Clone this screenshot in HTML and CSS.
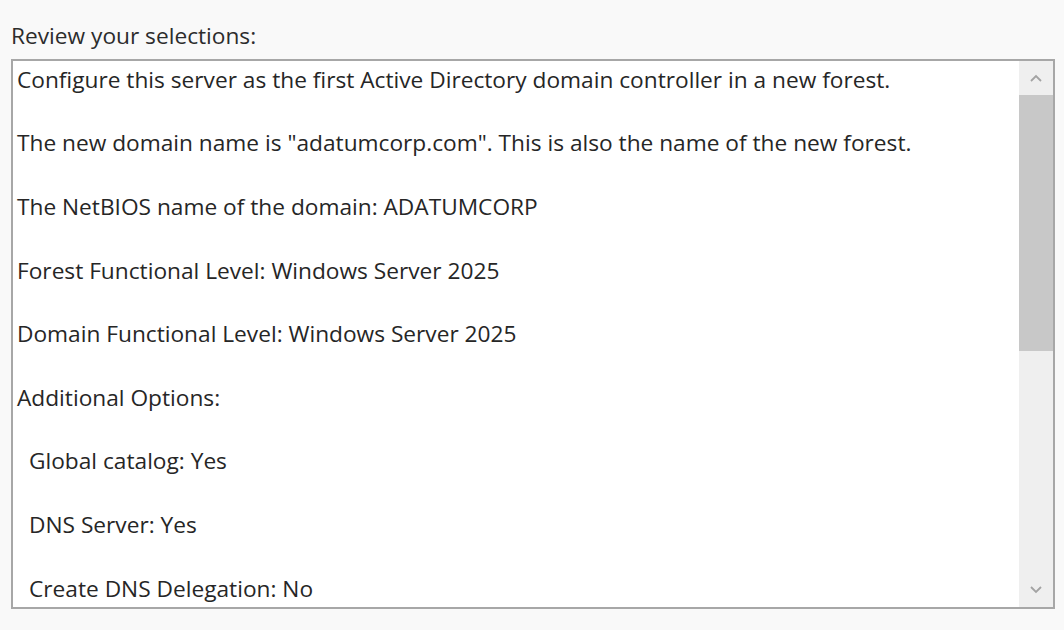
FILE: index.html
```html
<!DOCTYPE html>
<html lang="en">
<head>
<meta charset="utf-8">
<title>Review your selections</title>
<link rel="stylesheet" href="styles.css">
</head>
<body>
<main class="page">
  <div class="label">Review your selections:</div>
  <div class="review-box">
    <div class="review-content">
      <p>Configure this server as the first Active Directory domain controller in a new forest.</p>
      <p>The new domain name is "adatumcorp.com". This is also the name of the new forest.</p>
      <p>The NetBIOS name of the domain: ADATUMCORP</p>
      <p>Forest Functional Level: Windows Server 2025</p>
      <p>Domain Functional Level: Windows Server 2025</p>
      <p>Additional Options:</p>
      <p class="indent">Global catalog: Yes</p>
      <p class="indent">DNS Server: Yes</p>
      <p class="indent">Create DNS Delegation: No</p>
    </div>
    <div class="scrollbar">
      <div class="scroll-btn">
        <svg width="12" height="8" viewBox="0 0 12 8"><path d="M1 7 L6 2 L11 7" fill="none" stroke="#a3a3a3" stroke-width="1.8"/></svg>
      </div>
      <div class="scroll-track">
        <div class="scroll-thumb"></div>
      </div>
      <div class="scroll-btn">
        <svg width="12" height="8" viewBox="0 0 12 8"><path d="M1 1 L6 6 L11 1" fill="none" stroke="#a3a3a3" stroke-width="1.8"/></svg>
      </div>
    </div>
  </div>
</main>
</body>
</html>
```

FILE: styles.css
```css
html, body {
  margin: 0;
  padding: 0;
  background: #f9f9f9;
}

.page {
  font-family: "Open Sans", "Noto Sans", sans-serif;
  font-size: 22.7px;
  line-height: 31.8px;
  color: #262626;
  padding: 20px 9px 0 11px;
}

.label {
  color: #2c2c2c;
}

.review-box {
  margin-top: 7px;
  width: 1044px;
  height: 550px;
  box-sizing: border-box;
  border: 2px solid #a7a7a7;
  background: #ffffff;
  display: flex;
}

.review-content {
  flex: 1;
  overflow: hidden;
  padding: 3px 0 0 4px;
}

.review-content p {
  margin: 0 0 31.8px 0;
  white-space: nowrap;
}

.review-content .indent {
  padding-left: 12px;
}

.scrollbar {
  width: 34px;
  display: flex;
  flex-direction: column;
  background: #efefef;
}

.scroll-btn {
  height: 34px;
  display: flex;
  align-items: center;
  justify-content: center;
  flex: none;
}

.scroll-track {
  flex: 1;
  display: flex;
  flex-direction: column;
}

.scroll-thumb {
  height: 256px;
  background: #c8c8c8;
}
```
